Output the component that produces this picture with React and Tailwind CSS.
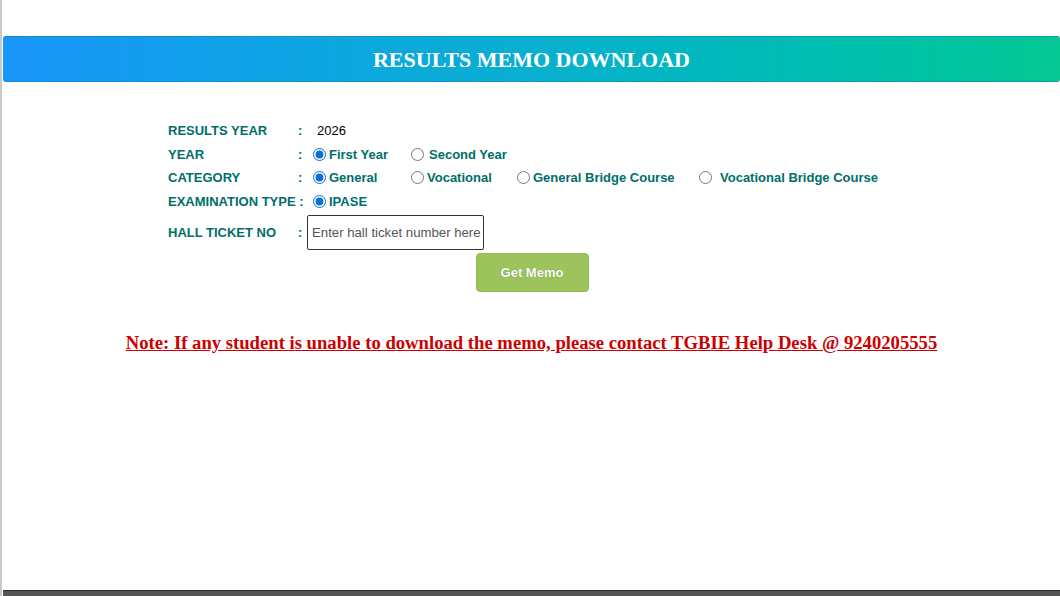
import React from "react";

function Radio({ checked, name }) {
  return (
    <input
      type="radio"
      name={name}
      defaultChecked={checked}
      className="m-0 mr-[3px] ml-[5px] h-[13px] w-[13px] shrink-0 accent-[#0a6fd6]"
    />
  );
}

function Row({ label, colonClass = "", children, h = "h-[23.5px]" }) {
  return (
    <div className={`flex items-center ${h}`}>
      <div className="w-[130px] shrink-0 whitespace-nowrap text-[13px] font-bold text-[#006e6a]">{label}</div>
      <div className={`w-[10px] shrink-0 text-[13px] font-bold text-[#006e6a] ${colonClass}`}>:</div>
      <div className="flex items-center">{children}</div>
    </div>
  );
}

function Opt({ w, checked, name, text, gap = "" }) {
  return (
    <label className={`flex items-center ${w}`}>
      <Radio checked={checked} name={name} />
      <span className={`whitespace-nowrap text-[13px] font-bold text-[#006e6a] ${gap}`}>{text}</span>
    </label>
  );
}

export default function App() {
  return (
    <div
      className="flex h-[596px] w-[1060px] flex-col border-l-2 border-[#c9c9c9] bg-white pl-px"
      style={{ fontFamily: '"Liberation Sans", Arial, sans-serif' }}
    >
      <div className="flex-1">
        <div className="mt-[36px] flex h-[46px] items-center justify-center rounded-[3px] border-y border-[#0b86b5]/60 bg-gradient-to-r from-[#1a96fa] via-[#0aafd0] to-[#05c893]">
          <h1
            className="text-[22px] font-bold text-white"
            style={{ fontFamily: '"Liberation Serif", "Times New Roman", serif' }}
          >
            RESULTS MEMO DOWNLOAD
          </h1>
        </div>

        <div className="ml-[165px] mt-[37px] flex flex-col">
          <Row label="RESULTS YEAR">
            <span className="pl-[9px] text-[13px] text-black">2026</span>
          </Row>
          <Row label="YEAR">
            <Opt w="w-[98px]" checked name="year" text="First Year" />
            <Opt w="" name="year" text="Second Year" gap="ml-[2px]" />
          </Row>
          <Row label="CATEGORY">
            <Opt w="w-[98px]" checked name="cat" text="General" />
            <Opt w="w-[106px]" name="cat" text="Vocational" />
            <Opt w="w-[182px]" name="cat" text="General Bridge Course" />
            <Opt w="" name="cat" text="Vocational Bridge Course" gap="ml-[5px]" />
          </Row>
          <Row label="EXAMINATION TYPE :" colonClass="invisible">
            <Opt w="" checked name="exam" text="IPASE" />
          </Row>
          <div className="mt-[2px] flex h-[35px] items-center">
            <div className="w-[130px] shrink-0 whitespace-nowrap text-[13px] font-bold text-[#006e6a]">HALL TICKET NO</div>
            <div className="w-[9px] shrink-0 text-[13px] font-bold text-[#006e6a]">:</div>
            <input
              type="text"
              placeholder="Enter hall ticket number here"
              className="h-[35px] w-[177px] rounded-[2px] border border-[#333] pl-[4px] pr-[2px] text-[13.2px] text-black outline-none placeholder:text-[#555]"
            />
          </div>
        </div>

        <div className="mt-[3px] flex justify-center pl-[1px]">
          <button
            className="h-[39px] w-[113px] rounded-[4px] border border-[#93bb55] bg-[#9cc35c] text-[13px] font-bold text-white"
            style={{ textShadow: "0 0 1px rgba(0,0,0,0.35)" }}
          >
            Get Memo
          </button>
        </div>

        <div className="mt-[37px] flex justify-center">
          <p
            className="text-[18.67px] font-bold text-[#cc0000] underline"
            style={{ fontFamily: '"Liberation Serif", "Times New Roman", serif' }}
          >
            Note: If any student is unable to download the memo, please contact TGBIE Help Desk @ 9240205555
          </p>
        </div>
      </div>
      <div className="h-[6px] border-t border-[#2e2e2e] bg-[#555555]" />
    </div>
  );
}
